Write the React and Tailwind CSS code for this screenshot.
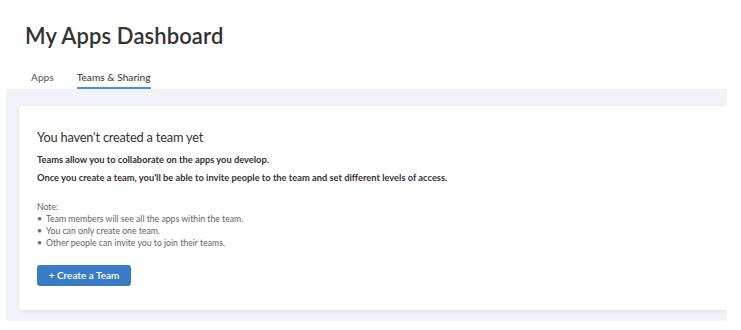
export default function App() {
  const font = { fontFamily: "Lato, 'Open Sans', sans-serif" };
  return (
    <div className="w-[741px] h-[330px] bg-white overflow-hidden" style={font}>
      <div className="pt-[20px] pl-[25px]">
        <h1 className="text-[22px] leading-[32px] font-semibold text-[#333] tracking-[0.1px]">My Apps Dashboard</h1>
      </div>
      <div className="flex items-end pl-[31px] mt-[14px] h-[23px] gap-[23px] text-[10.2px] text-[#555]">
        <div className="h-[23px] pt-[4px]">Apps</div>
        <div className="h-[23px] pt-[4px] border-b-2 border-[#4a8fd8] text-[#333]">Teams &amp; Sharing</div>
      </div>
      <div className="ml-[6px] w-[721px] bg-[#f3f4f7] pt-[17px] pl-[13px] pb-[11px] overflow-hidden">
        <div className="w-[740px] h-[204px] bg-white rounded-[3px] shadow-[0_1px_4px_rgba(0,0,0,0.08)] pl-[18px] pt-[21px]">
          <h2 className="text-[12.8px] leading-[20px] text-[#333] tracking-[-0.2px]">You haven't created a team yet</h2>
          <p className="mt-[7px] text-[9.3px] leading-[12px] font-bold text-[#333]">Teams allow you to collaborate on the apps you develop.</p>
          <p className="mt-[6px] text-[9.3px] leading-[12px] font-bold text-[#333]">Once you create a team, you'll be able to invite people to the team and set different levels of access.</p>
          <div className="mt-[17px] text-[8.7px] leading-[12px] text-[#666]">
            <div>Note:</div>
            <ul>
              <li className="flex"><span className="w-[9px]">•</span>Team members will see all the apps within the team.</li>
              <li className="flex"><span className="w-[9px]">•</span>You can only create one team.</li>
              <li className="flex"><span className="w-[9px]">•</span>Other people can invite you to join their teams.</li>
            </ul>
          </div>
          <button className="mt-[16px] w-[94px] h-[21px] bg-[#3a7bc6] rounded-[3px] text-white text-[10px] font-semibold flex items-center justify-center">+ Create a Team</button>
        </div>
      </div>
    </div>
  );
}
